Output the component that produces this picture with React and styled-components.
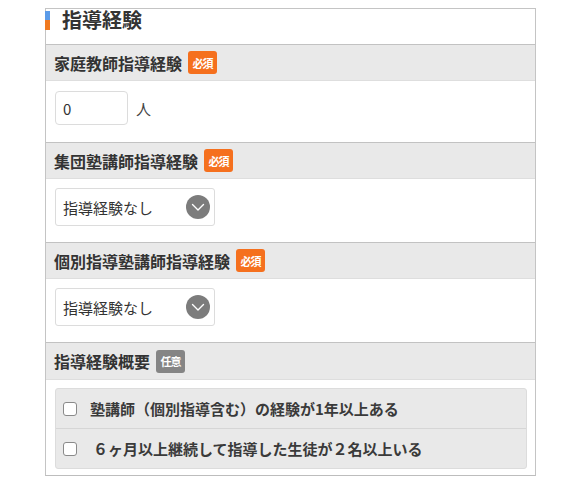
import React from 'react'
import styled, { createGlobalStyle } from 'styled-components'

const GlobalStyle = createGlobalStyle`
    body {
        margin: 0;
        background: #fff;
        font-family: "Noto Sans CJK JP", "Liberation Sans", sans-serif;
        color: #333;
    }
`

const Page = styled.div`
    padding: 8px 0 0 45px;
    width: 491px;
`

const Frame = styled.section`
    border: 1px solid #c4c4c4;
    border-bottom-color: #bdbdbd;
    background: #fff;
`

const Title = styled.h2`
    position: relative;
    margin: 0;
    height: 35px;
    padding-left: 16px;
    font-size: 20px;
    font-weight: 700;
    line-height: 20px;
    padding-top: 1px;
    box-sizing: border-box;
    color: #333;
    &:before {
        content: "";
        position: absolute;
        left: -1px;
        top: 2px;
        width: 5px;
        height: 9px;
        background: #5b9be8;
    }
    &:after {
        content: "";
        position: absolute;
        left: -1px;
        top: 11px;
        width: 5px;
        height: 10px;
        background: #f07a21;
    }
`

const Header = styled.div`
    display: flex;
    align-items: center;
    gap: 6px;
    box-sizing: border-box;
    height: ${props => props.height || '37px'};
    padding-left: 8px;
    background: #e9e9e9;
    border-top: 1px solid #c2c2c2;
    border-bottom: 1px solid #dedede;
    font-size: 16px;
    font-weight: 700;
    color: #333;
`

const Badge = styled.span`
    display: inline-flex;
    align-items: center;
    justify-content: center;
    width: 29px;
    height: 23px;
    border-radius: 3px;
    background: ${props => props.optional ? '#858585' : '#f5701e'};
    color: #fff;
    font-size: 11px;
    font-weight: 700;
    letter-spacing: -1px;
`

const Body = styled.div`
    display: flex;
    align-items: center;
    gap: 8px;
    padding: ${props => props.padding || '9px 9px 16px'};
`

const NumberInput = styled.input`
    width: 73px;
    height: 34px;
    box-sizing: border-box;
    border: 1px solid #dcdcdc;
    border-radius: 4px;
    padding: 0 7px;
    font-family: inherit;
    font-size: 15px;
    color: #333;
    outline: none;
`

const Unit = styled.span`
    font-size: 15px;
    color: #444;
`

const Select = styled.div`
    display: flex;
    align-items: center;
    justify-content: space-between;
    width: 160px;
    height: 38px;
    box-sizing: border-box;
    padding: 0 4px 0 7px;
    border: 1px solid #dcdcdc;
    border-radius: 3px;
    font-size: 15px;
    color: #333;
`

const Chevron = styled.span`
    display: flex;
    align-items: center;
    justify-content: center;
    width: 24px;
    height: 24px;
    border-radius: 50%;
    background: #7c7c7c;
`

const CheckList = styled.div`
    flex: 1;
    background: #e9e9e9;
    border: 1px solid #dcdcdc;
    border-radius: 3px;
`

const CheckRow = styled.label`
    display: flex;
    align-items: center;
    height: 39px;
    padding-left: 7px;
    font-size: 15px;
    font-weight: 700;
    color: #3a3a3a;
    & + & {
        border-top: 1px solid #d6d6d6;
    }
`

const Box = styled.span`
    width: 14px;
    height: 14px;
    box-sizing: border-box;
    border: 1px solid #8a8a8a;
    border-radius: 3px;
    background: #fff;
    margin-right: ${props => props.gap || '13px'};
`

const Dropdown = ({ value }) => (
    <Select>
        <span>{value}</span>
        <Chevron>
            <svg width="14" height="9" viewBox="0 0 14 9">
                <path d="M1.5 1.5 L7 7 L12.5 1.5" fill="none" stroke="#fff" strokeWidth="1.4" strokeLinecap="round" strokeLinejoin="round" />
            </svg>
        </Chevron>
    </Select>
)

const App = () => {
    return (
        <Page>
            <GlobalStyle />
            <Frame>
                <Title>指導経験</Title>

                <Header>家庭教師指導経験<Badge>必須</Badge></Header>
                <Body padding="10px 9px 17px">
                    <NumberInput type="text" defaultValue="0" />
                    <Unit>人</Unit>
                </Body>

                <Header>集団塾講師指導経験<Badge>必須</Badge></Header>
                <Body>
                    <Dropdown value="指導経験なし" />
                </Body>

                <Header>個別指導塾講師指導経験<Badge>必須</Badge></Header>
                <Body>
                    <Dropdown value="指導経験なし" />
                </Body>

                <Header height="38px">指導経験概要<Badge optional>任意</Badge></Header>
                <Body padding="8px 8px 6px 9px">
                    <CheckList>
                        <CheckRow><Box />塾講師（個別指導含む）の経験が1年以上ある</CheckRow>
                        <CheckRow><Box gap="16px" />６ヶ月以上継続して指導した生徒が２名以上いる</CheckRow>
                    </CheckList>
                </Body>
            </Frame>
        </Page>
    )
}

export default App
